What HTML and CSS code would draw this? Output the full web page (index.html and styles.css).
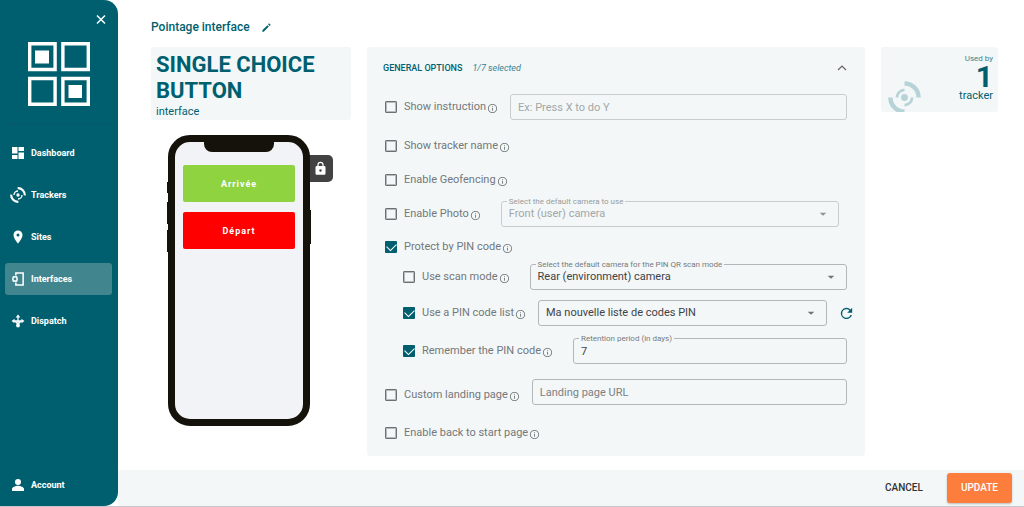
FILE: index.html
```html
<!DOCTYPE html>
<html lang="en">
<head>
<meta charset="utf-8">
<meta name="viewport" content="width=device-width, initial-scale=1">
<title>Pointage interface</title>
<link rel="stylesheet" href="styles.css">
</head>
<body>
<svg class="defs" aria-hidden="true">
  <symbol id="info" viewBox="0 0 24 24"><path d="M11 7h2v2h-2zm0 4h2v6h-2zm1-9C6.480 2 2 6.480 2 12s4.480 10 10 10 10-4.480 10-10S17.520 2 12 2zm0 18.200c-4.500 0-8.200-3.700-8.200-8.200S7.500 3.800 12 3.800s8.200 3.700 8.200 8.200-3.700 8.200-8.200 8.200z"/></symbol>
  <symbol id="arrow" viewBox="0 0 24 24"><path d="M4 9l8 7 8-7z"/></symbol>
  <symbol id="tracker" viewBox="0 0 48 48">
    <circle cx="24" cy="24" r="5" fill="currentColor"/>
    <g fill="none" stroke="currentColor">
      <path stroke-width="4" d="M13 24a11 11 0 0 1 11-11M35 24a11 11 0 0 1-11 11"/>
      <path stroke-width="6.500" d="M24 3.500A20.500 20.500 0 0 1 44.500 24M24 44.500A20.500 20.500 0 0 1 3.500 24"/>
    </g>
  </symbol>
</svg>
<div class="app">
  <aside class="sidebar">
    <button class="close" aria-label="Close menu"><svg viewBox="0 0 10 10"><path d="M1 1l8 8M9 1L1 9"/></svg></button>
    <svg class="logo" viewBox="0 0 62 64" role="img" aria-label="Logo">
      <g fill="none" stroke="#fff" stroke-width="3.400"><path d="M1.700 1.700h25.400v25.800H1.700zM34.900 1.700h25.400v25.800H34.900zM1.700 36.500h25.400v25.800H1.700zM34.900 36.500h25.400v25.800H34.900z"/></g>
      <path fill="#fff" d="M7 8.500h14v13H7zM40.500 43h13.500v13H40.500z"/>
    </svg>
    <nav class="nav">
      <a href="#"><svg viewBox="0 0 24 24"><path d="M0 0h11v13H0zM0 16h11v8H0zM13 0h11v8H13zM13 11h11v13H13z"/></svg>Dashboard</a>
      <a href="#"><svg class="big" viewBox="0 0 48 48"><g fill="none" stroke="#fff"><circle cx="24" cy="24" r="5" fill="#fff" stroke="none"/><path stroke-width="4" d="M12 24a12 12 0 0 1 12-12M36 24a12 12 0 0 1-12 12"/><path stroke-width="6.500" d="M23 3.500A20.500 20.500 0 0 1 44.500 25M25 44.500A20.500 20.500 0 0 1 3.500 23"/></g></svg>Trackers</a>
      <a href="#"><svg viewBox="0 0 24 24"><path d="M12-1C7-1 3 3 3 8c0 7 9 17 9 17s9-10 9-17c0-5-4-9-9-9zm0 12a3 3 0 1 1 0-6 3 3 0 0 1 0 6z"/></svg>Sites</a>
      <a href="#" class="active" aria-current="page"><svg viewBox="0 0 28 28"><path fill="none" stroke="#fff" stroke-width="3.500" d="M9 6V0h17v28H9v-6"/><circle cx="7" cy="14" r="5" fill="none" stroke="#fff" stroke-width="3.500"/><path fill="none" stroke="#fff" stroke-width="2.500" d="M2 8l2 2M12 8l-2 2M2 20l2-2M12 20l-2-2"/></svg>Interfaces</a>
      <a href="#"><svg viewBox="0 0 28 28"><path fill="none" stroke="#fff" stroke-width="3" d="M14 24V4M4 14h20M14 22L7 14M14 22l7-8"/><path d="M14-1l5.500 7h-11zM-1 14l7-5.500v11zM29 14l-7-5.500v11z"/><circle cx="14" cy="24.500" r="4.500"/></svg>Dispatch</a>
    </nav>
    <nav class="nav nav-bottom">
      <a href="#"><svg viewBox="0 0 24 24"><circle cx="12" cy="6" r="6"/><path d="M0 24v-4c0-4 8-6.500 12-6.500S24 16 24 20v4z"/></svg>Account</a>
    </nav>
  </aside>
  <div class="page">
    <main class="content">
      <header class="title">
        <h1>Pointage interface</h1>
        <button class="edit" aria-label="Rename"><svg viewBox="0 0 24 24"><path d="M3 18v3h3L17 10l-3-3zM20.500 7a1 1 0 0 0 0-1.400l-2.100-2.100a1 1 0 0 0-1.400 0L15.500 5 19 8.500z"/></svg></button>
      </header>
      <div class="columns">
        <section class="preview">
          <div class="card kind"><h2>SINGLE CHOICE BUTTON</h2><p>interface</p></div>
          <div class="phone-wrap">
            <div class="lock"><svg viewBox="0 0 24 24"><path d="M18 8h-1V6A5 5 0 0 0 7 6v2H6a2 2 0 0 0-2 2v10c0 1.100.9 2 2 2h12a2 2 0 0 0 2-2V10a2 2 0 0 0-2-2zm-6 9a2 2 0 1 1 0-4 2 2 0 0 1 0 4zM9 8V6a3 3 0 0 1 6 0v2z"/></svg></div>
            <i class="key key-mute"></i><i class="key key-up"></i><i class="key key-down"></i><i class="key key-power"></i>
            <div class="phone">
              <i class="notch"></i>
              <button class="choice green">Arrivée</button>
              <button class="choice red">Départ</button>
            </div>
          </div>
        </section>
        <form class="card options" id="options">
          <div class="options-head">
            <h3>GENERAL OPTIONS</h3><em>1/7 selected</em>
            <button type="button" class="collapse" aria-label="Collapse"><svg viewBox="0 0 10 10"><path d="M1 7l4-4 4 4"/></svg></button>
          </div>
          <div class="row">
            <label class="check"><input type="checkbox">Show instruction</label><svg class="info"><use href="#info"/></svg>
            <div class="field light"><input type="text" aria-label="Instruction" placeholder="Ex: Press X to do Y"></div>
          </div>
          <div class="row loose">
            <label class="check"><input type="checkbox">Show tracker name</label><svg class="info"><use href="#info"/></svg>
          </div>
          <div class="row tight">
            <label class="check"><input type="checkbox">Enable Geofencing</label><svg class="info"><use href="#info"/></svg>
          </div>
          <div class="row loose">
            <label class="check"><input type="checkbox">Enable Photo</label><svg class="info"><use href="#info"/></svg>
            <div class="field light spaced inset"><label class="caption" for="photo">Select the default camera to use</label>
              <select id="photo" disabled><option>Front (user) camera</option></select><svg class="arrow"><use href="#arrow"/></svg></div>
          </div>
          <div class="row snug">
            <label class="check"><input type="checkbox" checked>Protect by PIN code</label><svg class="info"><use href="#info"/></svg>
          </div>
          <div class="row medium nested">
            <label class="check"><input type="checkbox">Use scan mode</label><svg class="info"><use href="#info"/></svg>
            <div class="field spaced"><label class="caption" for="scan">Select the default camera for the PIN QR scan mode</label>
              <select id="scan"><option>Rear (environment) camera</option></select><svg class="arrow"><use href="#arrow"/></svg></div>
          </div>
          <div class="row nested">
            <label class="check"><input type="checkbox" checked>Use a PIN code list</label><svg class="info"><use href="#info"/></svg>
            <div class="field"><select aria-label="PIN code list"><option>Ma nouvelle liste de codes PIN</option></select><svg class="arrow"><use href="#arrow"/></svg></div>
            <button type="button" class="refresh" aria-label="Refresh list"><svg viewBox="0 0 24 24"><path d="M17.700 6.300A8 8 0 1 0 19.700 14h-2.100A6 6 0 1 1 12 6c1.700 0 3.100.7 4.200 1.800L13 11h7V4z"/></svg></button>
          </div>
          <div class="row nested">
            <label class="check"><input type="checkbox" checked>Remember the PIN code</label><svg class="info"><use href="#info"/></svg>
            <div class="field spaced"><label class="caption" for="days">Retention period (in days)</label><input type="text" id="days" value="7"></div>
          </div>
          <div class="row high">
            <label class="check"><input type="checkbox">Custom landing page</label><svg class="info"><use href="#info"/></svg>
            <div class="field"><input type="text" aria-label="Landing page URL" placeholder="Landing page URL"></div>
          </div>
          <div class="row">
            <label class="check"><input type="checkbox">Enable back to start page</label><svg class="info"><use href="#info"/></svg>
          </div>
        </form>
        <section class="card usage">
          <svg class="usage-icon"><use href="#tracker"/></svg>
          <div class="usage-text"><small>Used by</small><strong>1</strong><span>tracker</span></div>
        </section>
      </div>
    </main>
    <footer class="actions">
      <button class="cancel">CANCEL</button>
      <button class="update">UPDATE</button>
    </footer>
  </div>
</div>
</body>
</html>
```
FILE: styles.css
```css
* { box-sizing: border-box; }
body, h1, h2, h3, p { margin: 0; }
body { font-family: Roboto, "Liberation Sans", sans-serif; font-size: 12px; line-height: 16px; color: #005f6f; background: #fff; }
button { border: 0; padding: 0; background: none; color: inherit; font: inherit; cursor: pointer; }
button svg { display: block; }
.defs { display: none; }
.app { display: flex; min-height: 100vh; border-bottom: 1px solid #c9c5ce; }

.sidebar { display: flex; flex-direction: column; flex: 0 0 118px; padding: 14px 5px 5px; background: #005f6f; border-radius: 0 14px 14px 0; color: #fff; }
.close { align-self: flex-end; margin-right: 7px; }
.close svg { width: 10px; height: 11px; fill: none; stroke: #fff; stroke-width: 1.5; }
.logo { width: 62px; height: 64px; margin: 17px 0 18px 23px; }
.nav { display: flex; flex-direction: column; gap: 10px; margin-right: 1px; }
.nav:not(.nav-bottom) { border-top: 1px solid #0a5867; padding-top: 12px; }
.nav-bottom { margin-top: auto; }
.nav a { display: flex; align-items: center; gap: 7px; height: 32px; padding-left: 7px; border-radius: 3px; color: #fff; font-size: 9px; font-weight: 700; text-decoration: none; }
.nav a.active { background: #41858f; }
.nav svg { width: 12px; height: 12px; fill: #fff; overflow: visible; }
.nav svg.big { width: 16px; height: 16px; margin: 0 -2px; }

.page { flex: 1; min-width: 0; display: flex; flex-direction: column; }
.content { flex: 1; padding: 19px 26px 14px 33px; }
.title { display: flex; align-items: center; gap: 11px; margin-bottom: 12px; }
.title h1 { font-size: 12px; line-height: 16px; font-weight: 500; }
.edit svg { width: 11px; height: 11px; fill: #005f6f; }
.columns { display: grid; grid-template-columns: 200px minmax(0, 1fr) 117px; gap: 16px; align-items: start; }
.card { background: #f3f7f8; border-radius: 3px; }

.kind { padding: 5px 5px 0; }
.kind h2 { font-size: 22px; line-height: 26px; font-weight: 700; }
.kind p { font-size: 11px; line-height: 16px; }
.phone-wrap { position: relative; width: 142px; margin: 15px 0 0 17px; }
.phone { position: relative; display: flex; flex-direction: column; gap: 10px; min-height: 291px; padding: 23px 8px; border: 7px solid #15120c; border-radius: 22px; background: #f2f3f6; }
.notch { position: absolute; top: -1px; left: 29px; right: 29px; height: 11px; border-radius: 0 0 8px 8px; background: #15120c; }
.key { position: absolute; width: 3px; background: #15120c; }
.key-mute { left: -1px; top: 47px; height: 11px; }
.key-up { left: -1px; top: 67px; height: 22px; }
.key-down { left: -1px; top: 95px; height: 22px; }
.key-power { right: -1px; top: 75px; height: 34px; }
.lock { position: absolute; top: 20px; right: -23px; width: 36px; height: 27px; padding: 6px 6px 0 17px; border-radius: 5px; background: #424242; }
.lock svg { display: block; width: 15px; height: 15px; margin-left: -1px; fill: #fff; }
.choice { height: 37px; border-radius: 2px; color: #fff; font-size: 9px; font-weight: 700; letter-spacing: 1px; }
.green { background: #8fd341; }
.red { background: #fe0000; }

.options { padding: 0 18px 4px; }
.options-head { display: flex; align-items: center; gap: 10px; height: 41px; margin-left: -2px; }
.options-head h3 { font-size: 9px; font-weight: 500; }
.options-head em { font-size: 9px; color: #3c818c; }
.collapse { margin-left: auto; }
.collapse svg { width: 10px; height: 10px; fill: none; stroke: #666; stroke-width: 1.2; }
.row { display: flex; align-items: center; min-height: 38px; color: #74787a; }
.row.snug { min-height: 26px; }
.row.tight { min-height: 28px; }
.row.medium { min-height: 34px; }
.row.loose { min-height: 40px; }
.row.high { min-height: 44px; align-items: flex-end; padding-bottom: 9px; }
.row.high .check { padding-bottom: 2px; }
.row.high .info { margin-bottom: 3px; }
.row.nested { padding-left: 18px; }
.check { display: flex; align-items: center; gap: 7px; font-size: 11px; }
.check input { appearance: none; width: 12px; height: 12px; margin: 0; border: 1px solid #6d7173; border-radius: 1px; outline: 1px solid #b5babb; outline-offset: -2px; }
.check input:checked { border: 0; outline: 0; background: #005f6f; }
.check input:checked::before { content: ""; display: block; width: 8px; height: 5px; margin: 3px 0 0 2px; border: solid #fff; border-width: 0 0 1px 1px; transform: translateY(-1px) rotate(-45deg); }
.info { flex: none; width: 11px; height: 11px; margin: 2px 0 0 1px; fill: #74787a; }
.field { position: relative; flex: 1; min-width: 0; height: 26px; margin-left: 12px; border: 1px solid #b3b7b8; border-radius: 3px; }
.field.light { border-color: #c9cdce; }
.field.spaced { margin-left: 20px; }
.field.inset { margin-right: 8px; }
.field input, .field select { appearance: none; display: block; width: 100%; height: 24px; padding: 0 7px; border: 0; outline: 0; background: none; color: #3f4345; font: inherit; font-size: 11px; opacity: 1; }
.field ::placeholder { color: #7d8183; opacity: 1; }
.field.light ::placeholder, .field.light select { color: #a3a7a8; }
.caption { position: absolute; top: -5px; left: 5px; padding: 0 2px; background: #f3f7f8; color: #777b7d; font-size: 8px; line-height: 9px; white-space: nowrap; }
.light .caption { color: #979b9c; }
.arrow { position: absolute; right: 10px; top: 7px; width: 10px; height: 10px; fill: #707476; pointer-events: none; }
.light .arrow { fill: #8f9394; }
.refresh { margin: 0 -8px 0 11px; }
.refresh svg { width: 17px; height: 17px; fill: #005f6f; }

.usage { position: relative; display: flex; justify-content: flex-end; padding: 6px 5px 9px; overflow: hidden; }
.usage-icon { position: absolute; left: 7px; top: 34px; width: 33px; height: 33px; color: #b8d3d7; }
.usage-text { display: flex; flex-direction: column; align-items: flex-end; }
.usage small { font-size: 8px; line-height: 11px; color: #3c818c; }
.usage strong { font-size: 30px; line-height: 25px; font-weight: 700; }
.usage span { font-size: 11px; line-height: 14px; }

.actions { display: flex; justify-content: flex-end; align-items: center; gap: 24px; padding: 3px 12px 3px; min-height: 36px; background: #f3f7f8; font-size: 10px; font-weight: 500; }
.cancel { color: #333; }
.update { height: 30px; padding: 0 14px; border-radius: 3px; background: #fd7e3c; color: #fff; box-shadow: 0 1px 2px #bbb; }
```
